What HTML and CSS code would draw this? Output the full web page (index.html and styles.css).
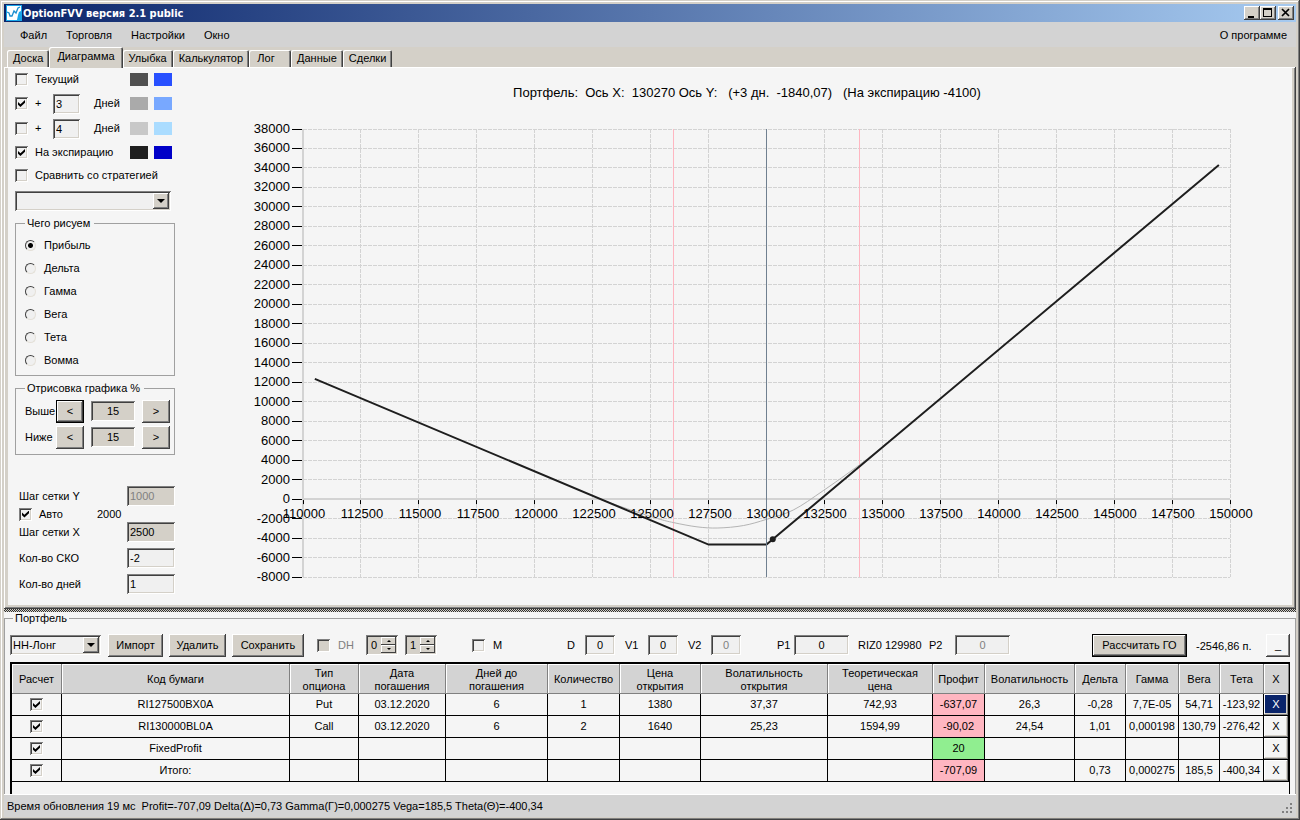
FILE: index.html
```html
<!DOCTYPE html>
<html lang="ru">
<head>
  <meta charset="UTF-8">
  <meta name="viewport" content="width=device-width, initial-scale=1.0">
  <title>OptionFVV версия 2.1 public</title>
  <link rel="stylesheet" href="styles.css">
</head>
<body>
  <div class="window">
    <header class="titlebar">
      <svg class="app-icon" width="16" height="16" viewBox="0 0 16 16">
        <rect width="16" height="16" fill="#19a5e8"/>
        <path d="M1 1h14v5l-2 1-1 3-1 5H1z" fill="#fff"/>
        <path d="M1 7l2 1 1 3 2 0 2-5 2 2 2-5 2-1" fill="none" stroke="#1c8fd0" stroke-width="1.3"/>
      </svg>
      <h1>OptionFVV версия 2.1 public</h1>
      <div class="window-buttons">
        <button class="win-btn" aria-label="Свернуть"><svg width="14" height="12"><path d="M3 9h6v2H3z"/></svg></button>
        <button class="win-btn" aria-label="Развернуть"><svg width="14" height="12"><path d="M2 1h9v9H2zM3 3v6h7V3z" fill-rule="evenodd"/></svg></button>
        <button class="win-btn win-close" aria-label="Закрыть"><svg width="14" height="12"><path d="M3 2l7 7M10 2L3 9" stroke="#000" stroke-width="1.7"/></svg></button>
      </div>
    </header>

    <nav class="menu">
      <a href="#">Файл</a>
      <a href="#">Торговля</a>
      <a href="#">Настройки</a>
      <a href="#">Окно</a>
      <a href="#" class="menu-about">О программе</a>
    </nav>

    <div class="tabs" role="tablist">
      <button class="tab" role="tab">Доска</button>
      <button class="tab tab-active" role="tab" aria-selected="true">Диаграмма</button>
      <button class="tab" role="tab">Улыбка</button>
      <button class="tab" role="tab">Калькулятор</button>
      <button class="tab tab-log" role="tab">Лог</button>
      <button class="tab" role="tab">Данные</button>
      <button class="tab" role="tab">Сделки</button>
    </div>

    <main class="panel">
      <div class="panel-body">
        <aside class="side">
          <div class="line">
            <input type="checkbox" id="cur"><label for="cur">Текущий</label>
            <span class="swatches"><i class="sw sw-cur1"></i><i class="sw sw-cur2"></i></span>
          </div>
          <div class="line line-days">
            <input type="checkbox" id="d1" checked><label for="d1" class="plus">+</label>
            <input type="text" class="field days" id="days1" value="3"><label for="days1">Дней</label>
            <span class="swatches"><i class="sw sw-a1"></i><i class="sw sw-a2"></i></span>
          </div>
          <div class="line line-days">
            <input type="checkbox" id="d2"><label for="d2" class="plus">+</label>
            <input type="text" class="field days" id="days2" value="4"><label for="days2">Дней</label>
            <span class="swatches"><i class="sw sw-b1"></i><i class="sw sw-b2"></i></span>
          </div>
          <div class="line">
            <input type="checkbox" id="exp" checked><label for="exp">На экспирацию</label>
            <span class="swatches"><i class="sw sw-exp1"></i><i class="sw sw-exp2"></i></span>
          </div>
          <div class="line">
            <input type="checkbox" id="cmp"><label for="cmp">Сравнить со стратегией</label>
          </div>
          <div class="combo combo-strategy"><select aria-label="Стратегия"><option></option></select></div>

          <fieldset class="group what">
            <legend>Чего рисуем</legend>
            <label><input type="radio" name="what" checked>Прибыль</label>
            <label><input type="radio" name="what">Дельта</label>
            <label><input type="radio" name="what">Гамма</label>
            <label><input type="radio" name="what">Вега</label>
            <label><input type="radio" name="what">Тета</label>
            <label><input type="radio" name="what">Вомма</label>
          </fieldset>

          <fieldset class="group range">
            <legend>Отрисовка графика %</legend>
            <div class="range-row">
              <label for="above">Выше</label>
              <button class="btn step btn-default">&lt;</button>
              <input type="text" class="field gray center" id="above" value="15">
              <button class="btn step">&gt;</button>
            </div>
            <div class="range-row">
              <label for="below">Ниже</label>
              <button class="btn step">&lt;</button>
              <input type="text" class="field gray center" id="below" value="15">
              <button class="btn step">&gt;</button>
            </div>
          </fieldset>

          <div class="settings">
            <div class="setting"><label for="gy">Шаг сетки Y</label><input type="text" class="field gray" id="gy" value="1000" disabled></div>
            <div class="setting-auto"><input type="checkbox" id="auto" checked><label for="auto">Авто</label><span>2000</span></div>
            <div class="setting spaced"><label for="gx">Шаг сетки X</label><input type="text" class="field gray" id="gx" value="2500"></div>
            <div class="setting spaced"><label for="sko">Кол-во СКО</label><input type="text" class="field" id="sko" value="-2"></div>
            <div class="setting"><label for="dn">Кол-во дней</label><input type="text" class="field" id="dn" value="1"></div>
          </div>
        </aside>

        <section class="chart-area">
          <h2 class="chart-title">Портфель:&nbsp; Ось X:&nbsp; 130270 Ось Y:&nbsp;&nbsp; (+3 дн.&nbsp; -1840,07)&nbsp;&nbsp; (На экспирацию -4100)</h2>
          <div class="chart" id="chart"></div>
        </section>
      </div>
    </main>

    <div class="splitter"></div>

    <section class="bottom">
      <fieldset class="portfolio">
        <legend>Портфель</legend>
        <div class="toolbar">
          <div class="combo combo-portfolio"><select aria-label="Портфель"><option>НН-Лонг</option></select></div>
          <button class="btn btn-import">Импорт</button>
          <button class="btn btn-delete">Удалить</button>
          <button class="btn btn-save">Сохранить</button>
          <label class="tool-check dh disabled"><input type="checkbox" class="gray" disabled>DH</label>
          <span class="spinner"><input type="number" value="0" aria-label="DH от"><span class="arrows"><button aria-label="Больше"></button><button aria-label="Меньше" class="down"></button></span></span>
          <span class="spinner"><input type="number" value="1" aria-label="DH до"><span class="arrows"><button aria-label="Больше"></button><button aria-label="Меньше" class="down"></button></span></span>
          <label class="tool-check m"><input type="checkbox">M</label>
          <label for="fd" class="lead">D</label><input type="text" class="field small center" id="fd" value="0">
          <label for="fv1">V1</label><input type="text" class="field small center" id="fv1" value="0">
          <label for="fv2">V2</label><input type="text" class="field small center" id="fv2" value="0" disabled>
          <label for="fp1" class="p1">P1</label><input type="text" class="field price center" id="fp1" value="0">
          <span class="ticker">RIZ0 129980</span>
          <label for="fp2" class="p2">P2</label><input type="text" class="field price center" id="fp2" value="0" disabled>
          <button class="btn btn-default btn-margin">Рассчитать ГО</button>
          <span class="margin-sum">-2546,86 п.</span>
          <button class="btn btn-min">_</button>
        </div>

        <div class="grid-wrap">
          <table class="grid">
            <colgroup>
              <col class="c-calc"><col><col class="c-type"><col class="c-date"><col class="c-days"><col class="c-qty"><col class="c-open"><col class="c-vol">
              <col class="c-theor"><col class="c-profit"><col class="c-iv"><col class="c-delta"><col class="c-gamma"><col class="c-vega"><col class="c-theta"><col class="c-x">
            </colgroup>
            <thead>
              <tr>
                <th>Расчет</th><th>Код бумаги</th><th>Тип<br>опциона</th><th>Дата<br>погашения</th><th>Дней до<br>погашения</th><th>Количество</th><th>Цена<br>открытия</th><th>Волатильность<br>открытия</th>
                <th>Теоретическая<br>цена</th><th>Профит</th><th>Волатильность</th><th>Дельта</th><th>Гамма</th><th>Вега</th><th>Тета</th><th>X</th>
              </tr>
            </thead>
            <tbody>
              <tr>
                <td><input type="checkbox" aria-label="Расчет RI127500BX0A" checked></td><td>RI127500BX0A</td><td>Put</td><td>03.12.2020</td><td>6</td><td>1</td><td>1380</td><td>37,37</td>
                <td>742,93</td><td class="loss">-637,07</td><td>26,3</td><td>-0,28</td><td>7,7E-05</td><td>54,71</td><td>-123,92</td><td><button class="x selected">X</button></td>
              </tr>
              <tr>
                <td><input type="checkbox" aria-label="Расчет RI130000BL0A" checked></td><td>RI130000BL0A</td><td>Call</td><td>03.12.2020</td><td>6</td><td>2</td><td>1640</td><td>25,23</td>
                <td>1594,99</td><td class="loss">-90,02</td><td>24,54</td><td>1,01</td><td>0,000198</td><td>130,79</td><td>-276,42</td><td><button class="x">X</button></td>
              </tr>
              <tr>
                <td><input type="checkbox" aria-label="Расчет FixedProfit" checked></td><td>FixedProfit</td><td></td><td></td><td></td><td></td><td></td><td></td>
                <td></td><td class="gain">20</td><td></td><td></td><td></td><td></td><td></td><td><button class="x">X</button></td>
              </tr>
              <tr>
                <td><input type="checkbox" aria-label="Расчет итого" checked></td><td>Итого:</td><td></td><td></td><td></td><td></td><td></td><td></td>
                <td></td><td class="loss">-707,09</td><td></td><td>0,73</td><td>0,000275</td><td>185,5</td><td>-400,34</td><td><button class="x">X</button></td>
              </tr>
            </tbody>
          </table>
        </div>
      </fieldset>
    </section>

    <footer class="status">
      <span>Время обновления 19 мс&nbsp; Profit=-707,09 Delta(Δ)=0,73 Gamma(Γ)=0,000275 Vega=185,5 Theta(Θ)=-400,34</span>
      <svg class="grip" width="12" height="14" fill="#808080"><path d="M8 0h2v2H8zM4 4h2v2H4zM8 4h2v2H8zM0 8h2v2H0zM4 8h2v2H4zM8 8h2v2H8z"/></svg>
    </footer>
  </div>
  <script src="script.js"></script>
</body>
</html>
```
FILE: styles.css
```css
* {
  box-sizing: border-box;
}

body {
  margin: 0;
  font: 11px/13px "Liberation Sans", Arial, sans-serif;
  color: #000;
  background: #d4d0c8;
}

button, input, select {
  font: inherit;
  color: inherit;
  margin: 0;
}

.window {
  display: flex;
  flex-direction: column;
  min-height: 100vh;
  padding: 4px 4px 3px;
  box-shadow: inset -1px -1px #404040, inset 1px 1px #d4d0c8, inset -2px -2px #808080, inset 2px 2px #fff;
}

/* заголовок окна */
.titlebar {
  display: flex;
  align-items: center;
  height: 18px;
  padding: 0 2px;
  background: linear-gradient(to right, #0a246a, #a6caf0);
}

.titlebar h1 {
  margin: 0 auto 0 1px;
  font: bold 11px/13px "DejaVu Sans Condensed", "Liberation Sans", sans-serif;
  color: #fff;
}

.window-buttons {
  display: flex;
}

.win-btn {
  width: 16px;
  height: 14px;
  padding: 0;
  border: 0;
  background: #d4d0c8;
  box-shadow: inset -1px -1px #404040, inset 1px 1px #fff, inset -2px -2px #808080;
}

.win-btn svg {
  display: block;
  margin: 0 auto;
}

.win-close {
  margin-left: 2px;
}

/* меню */
.menu {
  display: flex;
  gap: 19px;
  align-items: center;
  height: 25px;
  padding: 1px 9px 0 16px;
  background: #d3d3d3;
}

.menu a {
  color: #000;
  text-decoration: none;
}

.menu-about {
  margin-left: auto;
}

/* вкладки */
.tabs {
  display: flex;
  align-items: flex-end;
  height: 20px;
  padding-left: 3px;
}

.tab {
  height: 17px;
  padding: 0 6px;
  border: 0;
  border-radius: 2px 2px 0 0;
  background: #d4d0c8;
  box-shadow: inset 1px 1px #fff, inset -1px 0 #404040, inset -2px 0 #808080;
}

.tab-active {
  z-index: 1;
  height: 21px;
  margin-bottom: -1px;
  padding: 0 8px 2px;
}

.tab-log {
  width: 42px;
  padding-right: 14px;
}

.panel {
  display: flex;
  flex: 1;
  padding: 1px 4px 4px;
  background: #d4d0c8;
  box-shadow: inset -1px -1px #404040, inset 1px 1px #fff, inset -2px -2px #808080;
}

.panel-body {
  display: flex;
  flex: 1;
  min-width: 0;
  padding-left: 7px;
  background: #f5f5f5;
}

.side {
  flex: none;
  width: 160px;
  padding-bottom: 10px;
}

.line {
  display: flex;
  align-items: center;
  height: 23px;
}

.line-days {
  height: 25px;
}

.line > label {
  margin-left: 7px;
}

.line .plus {
  width: 18px;
}

.line .days + label {
  margin-left: 14px;
}

.swatches {
  display: flex;
  gap: 6px;
  margin-left: auto;
  padding-right: 3px;
}

.sw {
  width: 18px;
  height: 13px;
}

.sw-cur1 { background: #505050; }
.sw-cur2 { background: #2850ff; }
.sw-a1 { background: #aaaaaa; }
.sw-a2 { background: #78a8ff; }
.sw-b1 { background: #c8c8c8; }
.sw-b2 { background: #aadcff; }
.sw-exp1 { background: #1e1e1e; }
.sw-exp2 { background: #0000c8; }

/* общие элементы управления */
input[type="checkbox"] {
  appearance: none;
  flex: none;
  width: 13px;
  height: 13px;
  background: #f0f0f0;
  box-shadow: inset 1px 1px #808080, inset -1px -1px #fff, inset 2px 2px #404040, inset -2px -2px #d4d0c8;
}

input[type="checkbox"].gray {
  background: #d4d0c8;
}

input[type="checkbox"]:checked::before {
  content: "";
  display: block;
  width: 7px;
  height: 7px;
  margin: 3px;
  background: #000;
  clip-path: polygon(0 28%, 35% 62%, 100% 0, 100% 40%, 35% 100%, 0 68%);
}

input[type="radio"] {
  appearance: none;
  width: 11px;
  height: 11px;
  border: 1px solid;
  border-color: #404040 #e4e0d8 #e4e0d8 #404040;
  border-radius: 50%;
  background: #f0f0f0;
}

input[type="radio"]:checked {
  background: radial-gradient(circle, #000 2px, #f0f0f0 3px);
}

.field {
  width: 48px;
  height: 20px;
  padding: 0 3px;
  border: 0;
  border-radius: 0;
  background: #f0f0f0;
  box-shadow: inset 1px 1px #808080, inset -1px -1px #fff, inset 2px 2px #404040, inset -2px -2px #d4d0c8;
}

.field:disabled,
.disabled {
  color: #808080;
}

.gray {
  background: #d4d0c8;
}

.center {
  text-align: center;
}

.days {
  width: 27px;
}

.btn {
  flex: none;
  height: 23px;
  padding: 0;
  border: 0;
  background: #d4d0c8;
  box-shadow: inset -1px -1px #404040, inset 1px 1px #fff, inset -2px -2px #808080;
}

.btn-default {
  box-shadow: inset 0 0 0 1px #000, inset -2px -2px #404040, inset 2px 2px #fff, inset -3px -3px #808080;
}

.combo {
  position: relative;
}

.combo select {
  display: block;
  appearance: none;
  width: 100%;
  height: 20px;
  padding: 0 3px;
  border: 0;
  border-radius: 0;
  background: #f0f0f0;
  box-shadow: inset 1px 1px #808080, inset -1px -1px #fff, inset 2px 2px #404040, inset -2px -2px #d4d0c8;
}

.combo::before {
  content: "";
  position: absolute;
  top: 2px;
  right: 2px;
  width: 16px;
  height: 16px;
  background: #d4d0c8;
  box-shadow: inset -1px -1px #404040, inset 1px 1px #fff, inset -2px -2px #808080;
  pointer-events: none;
}

.combo::after {
  content: "";
  position: absolute;
  top: 8px;
  right: 6px;
  border: 4px solid transparent;
  border-top-color: #000;
  border-bottom: 0;
  pointer-events: none;
}

.combo-strategy {
  width: 156px;
  margin-top: 4px;
}

/* группы слева */
.group {
  min-width: 0;
  margin: 6px 0 0;
  border: 1px solid #a0a0a0;
}

.group legend {
  padding: 0 4px 0 2px;
}

.what {
  padding: 4px 9px 3px;
}

.what label {
  display: flex;
  gap: 8px;
  align-items: center;
  height: 23px;
}

.range {
  padding: 3px 4px 4px 9px;
}

.range-row {
  display: flex;
  align-items: center;
  height: 26px;
}

.range-row label {
  flex: 1;
}

.range-row .field {
  width: 44px;
  margin: 0 7px;
}

.step {
  width: 28px;
}

.settings {
  margin-top: 31px;
  padding-left: 4px;
}

.setting,
.setting-auto {
  display: flex;
  align-items: center;
}

.setting {
  justify-content: space-between;
}

.spaced {
  margin-bottom: 6px;
}

.setting-auto {
  height: 16px;
}

.setting-auto label {
  width: 58px;
  margin-left: 7px;
}

/* график */
.chart-area {
  display: flex;
  flex: 1;
  flex-direction: column;
  min-width: 0;
}

.chart-title {
  margin: 17px 0 0;
  padding-left: 27px;
  font-size: 13px;
  font-weight: normal;
  line-height: 16px;
  text-align: center;
}

.chart {
  flex: 1;
  min-height: 300px;
}

.chart svg {
  display: block;
}

.chart text {
  font-size: 13px;
}

.splitter {
  height: 3px;
  background: repeating-conic-gradient(#303030 0 25%, #d4d0c8 0 50%) 0 0 / 2px 2px;
}

/* портфель */
.bottom {
  background: #f5f5f5;
}

.portfolio {
  min-width: 0;
  margin: 0;
  padding: 8px 5px 0;
  border: solid #a0a0a0;
  border-width: 1px 1px 0;
}

.portfolio legend {
  margin-left: 3px;
  padding: 0 2px;
}

.toolbar {
  display: flex;
  align-items: center;
  height: 24px;
}

.combo-portfolio {
  width: 91px;
  margin-right: 7px;
}

.btn-import {
  width: 55px;
}

.btn-delete {
  width: 57px;
  margin: 0 6px;
}

.btn-save {
  width: 72px;
}

.tool-check {
  display: flex;
  gap: 8px;
  align-items: center;
}

.dh {
  width: 62px;
  padding-left: 13px;
}

.m {
  width: 95px;
}

.spinner {
  display: flex;
  width: 32px;
  height: 20px;
  margin-right: 7px;
  padding: 2px;
  background: #d4d0c8;
  box-shadow: inset 1px 1px #808080, inset -1px -1px #fff, inset 2px 2px #404040;
}

.spinner + .spinner {
  margin-right: 35px;
}

.spinner input {
  appearance: textfield;
  flex: 1;
  min-width: 0;
  padding: 0 0 0 3px;
  border: 0;
  background: none;
}

.spinner input::-webkit-inner-spin-button {
  display: none;
}

.arrows {
  display: flex;
  flex-direction: column;
  width: 15px;
}

.arrows button {
  flex: 1;
  display: flex;
  align-items: center;
  justify-content: center;
  padding: 0;
  border: 0;
  background: #d4d0c8;
  box-shadow: inset -1px -1px #404040, inset 1px 1px #fff;
}

.arrows button::before {
  content: "";
  border: 2px solid transparent;
  border-bottom-color: #000;
  border-top: 0;
}

.arrows .down::before {
  border-top: 2px solid #000;
  border-bottom: 0;
}

.toolbar > label:not(.tool-check) {
  width: 23px;
}

.toolbar > .lead:not(.tool-check) {
  width: 18px;
}

.small {
  width: 30px;
  margin-right: 10px;
}

.toolbar > .p1:not(.tool-check) {
  width: 17px;
  margin-left: 26px;
}

.toolbar > .p2:not(.tool-check) {
  width: 26px;
}

.price {
  width: 55px;
}

.ticker {
  width: 80px;
  padding-left: 9px;
  white-space: nowrap;
}

.btn-margin {
  width: 95px;
  margin-left: auto;
}

.margin-sum {
  width: 79px;
  padding: 2px 0 0 9px;
  white-space: nowrap;
}

.btn-min {
  width: 24px;
  background: #f5f5f5;
}

.grid-wrap {
  margin-top: 5px;
  padding-bottom: 12px;
  border: solid #000;
  border-width: 2px 1px 0 2px;
}

.grid {
  width: 100%;
  table-layout: fixed;
  border-spacing: 0;
  text-align: center;
}

.c-calc { width: 50px; }
.c-type { width: 69px; }
.c-date { width: 87px; }
.c-days { width: 102px; }
.c-qty { width: 72px; }
.c-open { width: 81px; }
.c-vol { width: 127px; }
.c-theor { width: 105px; }
.c-profit { width: 52px; }
.c-iv { width: 90px; }
.c-delta { width: 51px; }
.c-gamma { width: 53px; }
.c-vega { width: 41px; }
.c-theta { width: 44px; }
.c-x { width: 25px; }

.grid th {
  height: 30px;
  padding: 2px 0 0;
  border-right: 1px solid #808080;
  border-bottom: 1px solid #808080;
  background: #d3d3d3;
  box-shadow: inset 1px 1px #fff;
  font-weight: normal;
}

.grid td {
  height: 22px;
  padding: 0;
  border-right: 1px solid #000;
  border-bottom: 1px solid #000;
  white-space: nowrap;
}

.grid input {
  display: block;
  margin: 0 auto;
}

.loss {
  background: #ffb6c1;
}

.gain {
  background: #90ee90;
}

.x {
  display: block;
  width: 100%;
  height: 21px;
  padding: 0;
  border: 0;
  background: #f5f5f5;
  box-shadow: inset -1px -1px #808080, inset 1px 1px #fff, inset -2px -2px #d4d0c8;
}

.x.selected {
  background: #0a246a;
  color: #fff;
}

.status {
  display: flex;
  align-items: center;
  height: 23px;
  padding: 0 2px 0 3px;
  border-top: 1px solid #fff;
  background: #d3d3d3;
}

.grip {
  align-self: flex-end;
  margin-left: auto;
}
```
FILE: script.js
```js
const chart = document.getElementById('chart');

const xMin = 110000, xMax = 150000, xStep = 2500;
const yMin = -8000, yMax = 38000, yStep = 2000;

// профиль на экспирацию
const expiration = [[110510, 12350], [127500, -4670], [130000, -4670], [149520, 34300]];
// через 3 дня
const days3 = [[122800, 0], [124000, -1000], [125300, -2000], [126000, -2420], [127000, -2850], [127900, -2970],
  [129000, -2720], [130000, -2080], [131150, -1130], [132450, 870], [134000, 3500], [135300, 5950], [136500, 8300]];

function drawChart() {
  const w = chart.clientWidth;
  const h = chart.clientHeight;
  const left = 128, right = w - 62, top = 28, bottom = h - 28;
  const px = v => left + (v - xMin) / (xMax - xMin) * (right - left);
  const py = v => bottom - (v - yMin) / (yMax - yMin) * (bottom - top);
  const snap = v => Math.floor(v) + 0.5;
  const vline = (v, y1, y2, attrs) => `<path d="M${snap(px(v))} ${y1}V${y2}" ${attrs}/>`;
  const grid = 'stroke="#d3d3d3" stroke-dasharray="4 1"';
  let out = '';

  for (let y = yMin; y <= yMax; y += yStep) {
    const p = snap(py(y));
    out += `<path d="M${left} ${p}H${right}" ${grid}/>`;
    out += `<path d="M${left - 11} ${p}H${left - 1}" stroke="#000"/>`;
  }
  for (let x = xMin; x <= xMax; x += xStep) {
    out += vline(x, top, bottom, grid);
  }
  out += vline(126000, top, bottom, 'stroke="#ffb6c1"');
  out += vline(134000, top, bottom, 'stroke="#ffb6c1"');
  out += `<path d="M${left} ${top}V${bottom}M${left} ${Math.round(py(0))}H${right}" stroke="#d3d3d3" stroke-width="2"/>`;
  for (let x = xMin; x <= xMax; x += xStep) {
    out += vline(x, py(0) + 1, py(0) + 5, 'stroke="#000"');
  }

  out += `<path d="${smooth(days3.map(p => [px(p[0]), py(p[1])]))}" fill="none" stroke="#b4b4b4"/>`;
  out += `<polyline points="${expiration.map(p => px(p[0]) + ',' + py(p[1])).join(' ')}" fill="none" stroke="#1e1e1e" stroke-width="2"/>`;
  out += vline(130000, top, bottom, 'stroke="#708090"');
  out += `<circle cx="${px(130270)}" cy="${py(-4130)}" r="3" fill="#1e1e1e"/>`;

  for (let y = yMin; y <= yMax; y += yStep) {
    out += `<text x="${left - 13}" y="${Math.round(py(y)) + 4}" text-anchor="end">${y}</text>`;
  }
  for (let x = xMin; x <= xMax; x += xStep) {
    out += `<text x="${Math.round(px(x)) + 1}" y="${Math.round(py(0)) + 19}" text-anchor="middle">${x}</text>`;
  }

  chart.innerHTML = `<svg width="${w}" height="${h}">${out}</svg>`;
}

function smooth(pts) {
  let d = `M${pts[0]}`;
  for (let i = 0; i < pts.length - 1; i++) {
    const a = pts[i - 1] || pts[i], b = pts[i], c = pts[i + 1], e = pts[i + 2] || c;
    d += `C${b[0] + (c[0] - a[0]) / 6} ${b[1] + (c[1] - a[1]) / 6} ${c[0] - (e[0] - b[0]) / 6} ${c[1] - (e[1] - b[1]) / 6} ${c[0]} ${c[1]}`;
  }
  return d;
}

drawChart();
window.addEventListener('resize', () => {
  chart.innerHTML = '';
  drawChart();
});
```
